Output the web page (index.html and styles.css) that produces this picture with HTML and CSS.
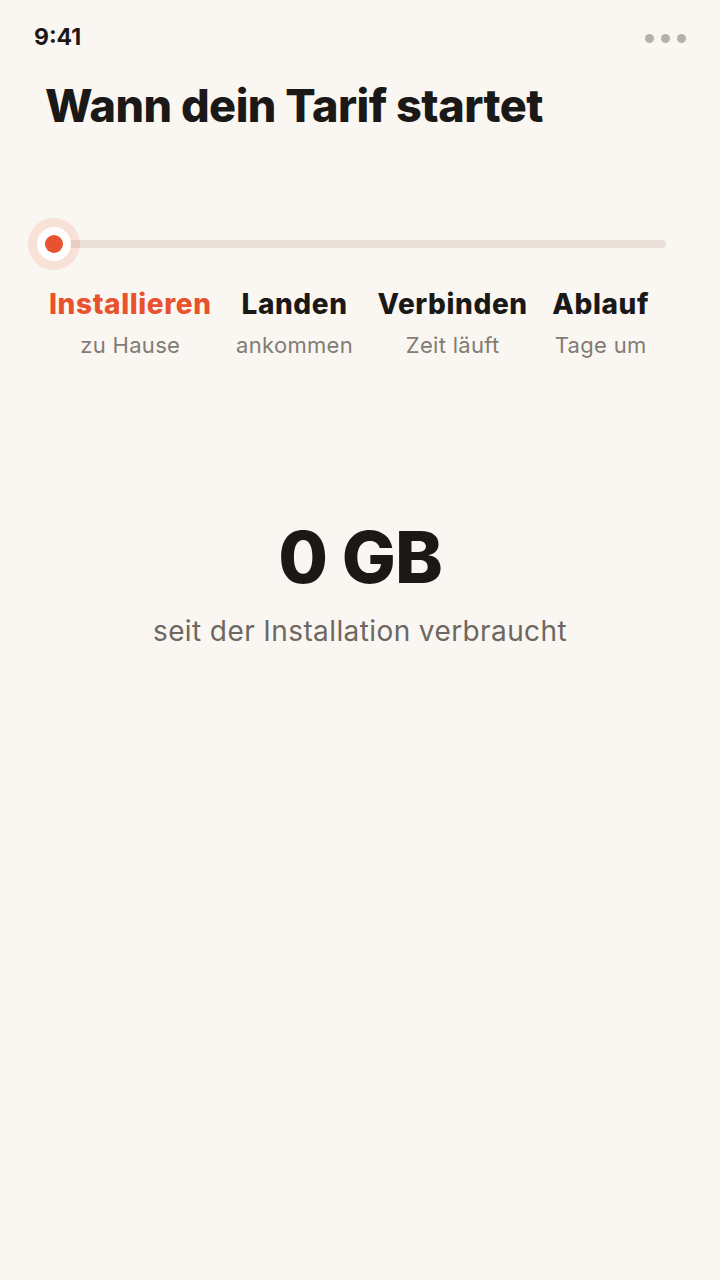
FILE: index.html
```html
<!DOCTYPE html>
<html lang="de">
<head>
<meta charset="utf-8">
<link rel="stylesheet" href="styles.css">
</head>
<body>
<div class="screen">
  <div class="status">
    <span class="time">9:41</span>
    <span class="dots"><i></i><i></i><i></i></span>
  </div>
  <h1 class="title">Wann dein Tarif startet</h1>
  <div class="track-wrap">
    <div class="track"></div>
    <div class="knob"><span class="ring"><span class="dot"></span></span></div>
  </div>
  <div class="steps">
    <div class="step active"><div class="label">Installieren</div><div class="sub">zu Hause</div></div>
    <div class="step"><div class="label">Landen</div><div class="sub">ankommen</div></div>
    <div class="step"><div class="label">Verbinden</div><div class="sub">Zeit läuft</div></div>
    <div class="step"><div class="label">Ablauf</div><div class="sub">Tage um</div></div>
  </div>
  <div class="usage">
    <div class="amount">0 GB</div>
    <div class="caption">seit der Installation verbraucht</div>
  </div>
</div>
</body>
</html>
```
FILE: styles.css
```css
* { box-sizing: border-box; }
html, body { margin: 0; padding: 0; }
body {
  background: #faf7f2;
  font-family: "Inter", "Liberation Sans", sans-serif;
  color: #1b1918;
}
.screen { width: 720px; height: 1280px; position: relative; }
.status {
  display: flex;
  justify-content: space-between;
  align-items: center;
  padding: 24px 34px 0 34px;
  height: 50px;
}
.time { font-size: 23px; font-weight: 700; letter-spacing: 0; }
.dots { display: flex; gap: 7px; margin-top: 2px; }
.dots i { width: 9px; height: 9px; border-radius: 50%; background: #b7b0a9; display: block; }
.title {
  margin: 30px 0 0 45px;
  font-size: 45px;
  font-weight: 800;
  letter-spacing: -0.5px;
  line-height: 52px;
}
.track-wrap {
  position: relative;
  margin: 86px 54px 0 28px;
  height: 52px;
  display: flex;
  align-items: center;
}
.track {
  flex: 1;
  height: 8px;
  margin-left: 25px;
  background: #e8e0d8;
  border-radius: 4px;
}
.knob {
  position: absolute;
  left: 0;
  top: 0;
  width: 52px;
  height: 52px;
  border-radius: 50%;
  background: rgba(238, 84, 48, 0.13);
  display: flex;
  align-items: center;
  justify-content: center;
}
.ring {
  width: 34px; height: 34px; border-radius: 50%;
  background: #fff;
  display: flex; align-items: center; justify-content: center;
}
.dot { width: 18px; height: 18px; border-radius: 50%; background: #e8522e; }
.steps {
  display: flex;
  justify-content: space-between;
  margin: 17px 71px 0 49px;
}
.step { display: flex; flex-direction: column; align-items: center; }
.label { font-size: 28px; font-weight: 800; letter-spacing: 0.6px; line-height: 34px; }
.step.active .label { color: #e8522e; }
.sub { font-size: 22px; color: #837b75; line-height: 28px; margin-top: 10px; letter-spacing: 0.3px; }
.usage {
  display: flex; flex-direction: column; align-items: center;
  margin-top: 158px;
}
.amount { font-size: 72px; font-weight: 800; letter-spacing: -1px; line-height: 80px; }
.caption { font-size: 28px; color: #6e6762; margin-top: 17px; letter-spacing: 0.4px; }
```
